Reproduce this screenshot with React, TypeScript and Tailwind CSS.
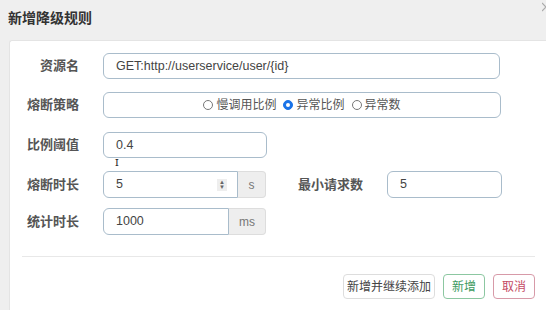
import React from "react";

const font = { fontFamily: '"Liberation Sans", "Noto Sans CJK SC", sans-serif' };

function Label({ text, w = "w-[69px]" }: { text: string; w?: string }) {
  return (
    <div className={`${w} shrink-0 text-right text-[13px] font-bold text-[#555]`}>{text}</div>
  );
}

function Radio({ label, checked }: { label: string; checked?: boolean }) {
  return (
    <span className="flex items-center gap-[3px]">
      {checked ? (
        <span className="w-[10px] h-[10px] rounded-full bg-[#1a73e8] border border-[#1a73e8] flex items-center justify-center">
          <span className="w-[4px] h-[4px] rounded-full bg-white" />
        </span>
      ) : (
        <span className="w-[10px] h-[10px] rounded-full border border-[#777] bg-white" />
      )}
      <span className="text-[12px] text-[#555]">{label}</span>
    </span>
  );
}

export default function App() {
  return (
    <div className="w-[546px] h-[310px] overflow-hidden bg-[#efefef] relative" style={font}>
      {/* header */}
      <div className="h-[40px] flex items-start pt-[8px] pl-[8px]">
        <h3 className="text-[14px] font-bold text-[#333]">新增降级规则</h3>
        <svg className="absolute right-0 top-[2px]" width="4" height="10" viewBox="0 0 4 10">
          <path d="M0 1 L4 5 L0 9" fill="none" stroke="#aaa" strokeWidth="1.2" />
        </svg>
      </div>

      <div className="ml-[9px] h-[280px] bg-white rounded-tl-[3px] border-l border-t border-[#e4e4e4] pt-[12px]">
        {/* 资源名 */}
        <div className="flex items-center h-[26px]">
          <Label text="资源名" />
          <div className="ml-[24px] w-[397px] h-[26px] rounded-[6px] border border-[#a9bccb] flex items-center pl-[12px] text-[12.5px] text-[#444]">
            GET:http://userservice/user/{"{id}"}
          </div>
        </div>

        {/* 熔断策略 */}
        <div className="flex items-center h-[26px] mt-[13px]">
          <Label text="熔断策略" />
          <div className="ml-[24px] w-[398px] h-[26px] rounded-[6px] border border-[#a9bccb] flex items-center justify-center gap-[7px]">
            <Radio label="慢调用比例" />
            <Radio label="异常比例" checked />
            <Radio label="异常数" />
          </div>
        </div>

        {/* 比例阈值 */}
        <div className="flex items-center h-[26px] mt-[14px]">
          <Label text="比例阈值" />
          <div className="ml-[24px] w-[164px] h-[26px] rounded-[6px] border border-[#a9bccb] flex items-center pl-[12px] text-[12.5px] text-[#444]">
            0.4
          </div>
        </div>

        <div className="relative">
          <span className="absolute left-[105px] top-[-1px] text-[11px] leading-none font-serif text-[#222]">I</span>
        </div>

        {/* 熔断时长 + 最小请求数 */}
        <div className="flex items-center h-[27px] mt-[13px]">
          <Label text="熔断时长" />
          <div className="ml-[24px] flex h-[27px]">
            <div className="w-[135px] h-full rounded-l-[6px] border border-[#a9bccb] flex items-center pl-[12px] pr-[10px] text-[12.5px] text-[#444]">
              <span className="flex-1">5</span>
              <span className="w-[10px] h-[12px] bg-[#eee] flex flex-col items-center justify-center text-[6px] leading-[5px] text-[#666]">
                <span>▲</span>
                <span>▼</span>
              </span>
            </div>
            <div className="w-[28px] h-full bg-[#eee] border border-l-0 border-[#ddd] rounded-r-[4px] flex items-center justify-center text-[12px] text-[#777]">
              s
            </div>
          </div>
          <div className="ml-[32px] text-[13px] font-bold text-[#555]">最小请求数</div>
          <div className="ml-[24px] w-[115px] h-[27px] rounded-[6px] border border-[#a9bccb] flex items-center pl-[12px] text-[12.5px] text-[#444]">
            5
          </div>
        </div>

        {/* 统计时长 */}
        <div className="flex items-center h-[27px] mt-[10px]">
          <Label text="统计时长" />
          <div className="ml-[24px] flex h-[27px]">
            <div className="w-[126px] h-full rounded-l-[6px] border border-[#a9bccb] flex items-center pl-[12px] text-[12.5px] text-[#444]">
              1000
            </div>
            <div className="w-[37px] h-full bg-[#eee] border border-l-0 border-[#ddd] rounded-r-[4px] flex items-center justify-center text-[12px] text-[#777]">
              ms
            </div>
          </div>
        </div>

        <div className="mt-[21px] ml-[12px] mr-[11px] border-t border-[#e8e8e8]" />

        <div className="flex justify-end gap-[8px] mt-[17px] mr-[11px]">
          <button className="w-[92px] h-[25px] rounded-[4px] border border-[#ddd] bg-white text-[12px] text-[#444]">
            新增并继续添加
          </button>
          <button className="w-[42px] h-[25px] rounded-[4px] border border-[#8cc7a1] bg-white text-[12px] text-[#3d9a5f]">
            新增
          </button>
          <button className="w-[42px] h-[25px] rounded-[4px] border border-[#d79aa8] bg-white text-[12px] text-[#c44a64]">
            取消
          </button>
        </div>
      </div>
    </div>
  );
}
